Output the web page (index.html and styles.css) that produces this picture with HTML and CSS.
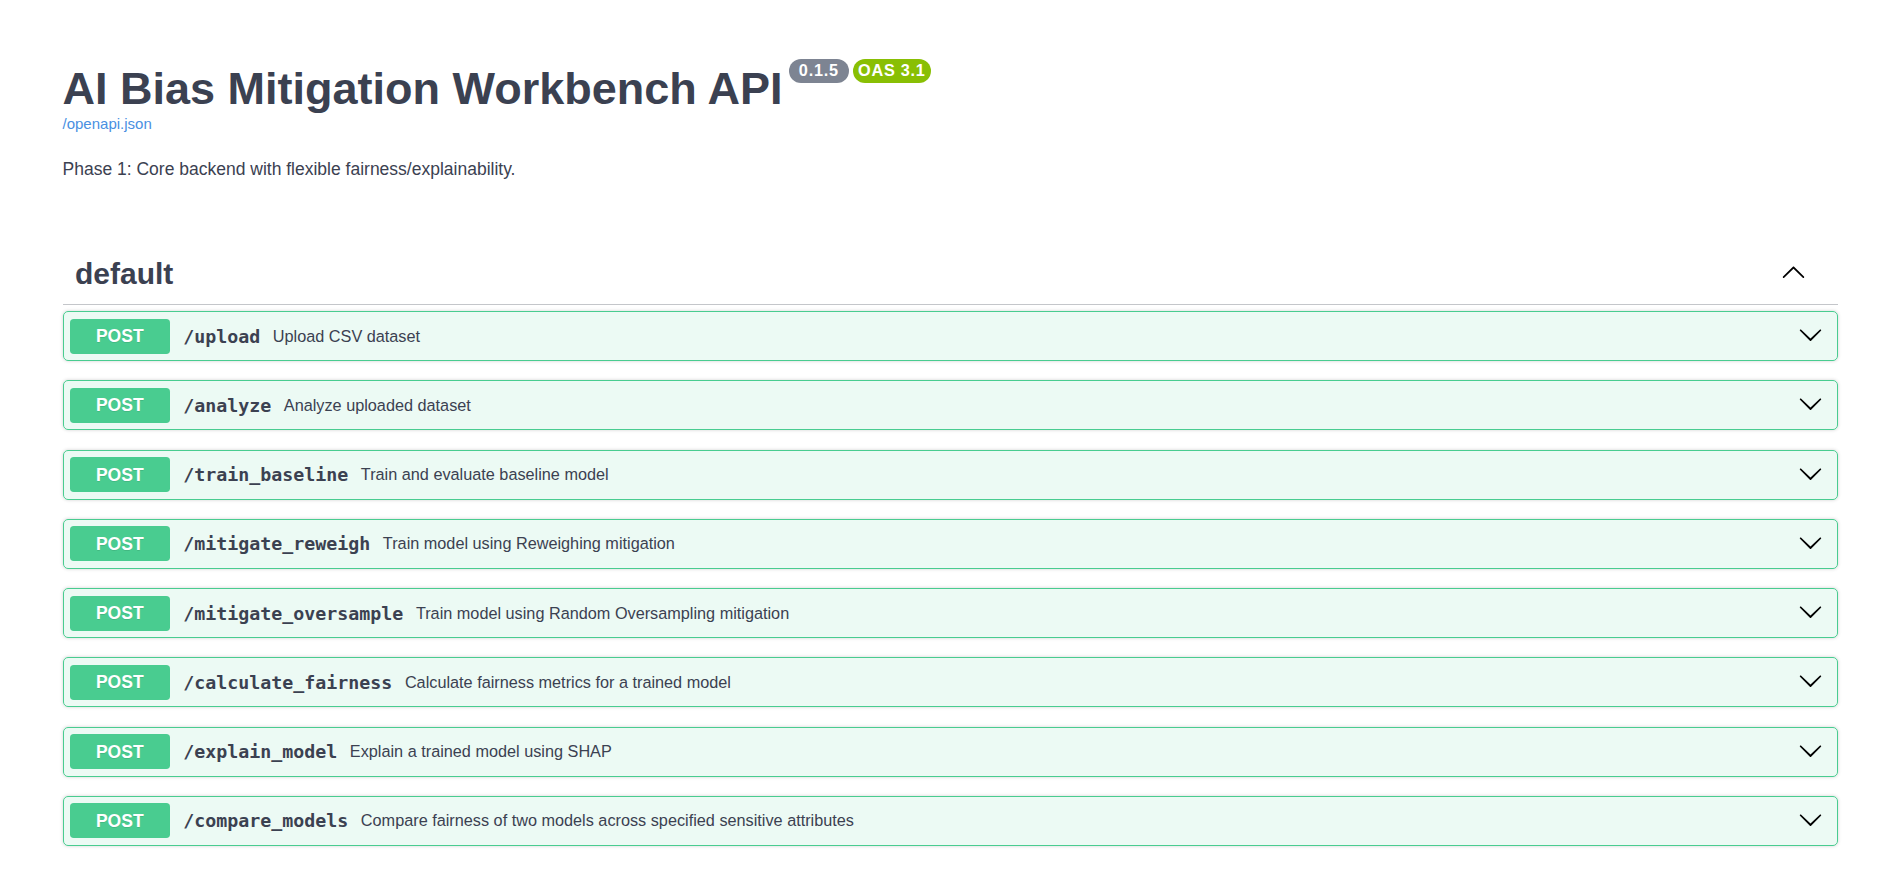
FILE: index.html
```html
<!DOCTYPE html>
<html lang="en">
<head>
<meta charset="utf-8">
<title>AI Bias Mitigation Workbench API - Swagger UI</title>
<link rel="stylesheet" href="styles.css">
</head>
<body>
<div class="wrapper">
  <section class="info">
    <div class="main">
      <h2 class="title">
        <span class="title-text">AI Bias Mitigation Workbench API</span>
        <small class="badge badge-version">&nbsp;0.1.5&nbsp;</small>
        <small class="badge badge-oas">OAS 3.1</small>
      </h2>
      <a class="spec-link" href="#">/openapi.json</a>
    </div>
    <p class="description">Phase 1: Core backend with flexible fairness/explainability.</p>
  </section>

  <section class="tag-section">
    <h3 class="tag">
      <span class="tag-name">default</span>
      <svg class="arrow arrow-up" width="25" height="25" viewBox="0 0 20 20" aria-hidden="true"><path d="M17.418 14.908c.272.268.709.268.979 0s.271-.701 0-.969l-7.908-7.83c-.27-.268-.707-.268-.979 0l-7.908 7.830c-.27.268-.27.701 0 .969.271.268.709.268.979 0L10 7.767l7.418 7.141z"/></svg>
    </h3>

    <div class="ops">
      <div class="op">
        <span class="method">POST</span>
        <span class="path">/upload</span>
        <span class="summary">Upload CSV dataset</span>
        <svg class="arrow arrow-down" width="25" height="25" viewBox="0 0 20 20" aria-hidden="true"><path d="M17.418 6.109c.272-.268.709-.268.979 0s.271.701 0 .969l-7.908 7.83c-.27.268-.707.268-.979 0l-7.908-7.83c-.27-.268-.27-.701 0-.969.271-.268.709-.268.979 0L10 13.25l7.418-7.141z"/></svg>
      </div>
      <div class="op">
        <span class="method">POST</span>
        <span class="path">/analyze</span>
        <span class="summary">Analyze uploaded dataset</span>
        <svg class="arrow arrow-down" width="25" height="25" viewBox="0 0 20 20" aria-hidden="true"><path d="M17.418 6.109c.272-.268.709-.268.979 0s.271.701 0 .969l-7.908 7.83c-.27.268-.707.268-.979 0l-7.908-7.83c-.27-.268-.27-.701 0-.969.271-.268.709-.268.979 0L10 13.25l7.418-7.141z"/></svg>
      </div>
      <div class="op">
        <span class="method">POST</span>
        <span class="path">/train_baseline</span>
        <span class="summary">Train and evaluate baseline model</span>
        <svg class="arrow arrow-down" width="25" height="25" viewBox="0 0 20 20" aria-hidden="true"><path d="M17.418 6.109c.272-.268.709-.268.979 0s.271.701 0 .969l-7.908 7.83c-.27.268-.707.268-.979 0l-7.908-7.83c-.27-.268-.27-.701 0-.969.271-.268.709-.268.979 0L10 13.25l7.418-7.141z"/></svg>
      </div>
      <div class="op">
        <span class="method">POST</span>
        <span class="path">/mitigate_reweigh</span>
        <span class="summary">Train model using Reweighing mitigation</span>
        <svg class="arrow arrow-down" width="25" height="25" viewBox="0 0 20 20" aria-hidden="true"><path d="M17.418 6.109c.272-.268.709-.268.979 0s.271.701 0 .969l-7.908 7.83c-.27.268-.707.268-.979 0l-7.908-7.83c-.27-.268-.27-.701 0-.969.271-.268.709-.268.979 0L10 13.25l7.418-7.141z"/></svg>
      </div>
      <div class="op">
        <span class="method">POST</span>
        <span class="path">/mitigate_oversample</span>
        <span class="summary">Train model using Random Oversampling mitigation</span>
        <svg class="arrow arrow-down" width="25" height="25" viewBox="0 0 20 20" aria-hidden="true"><path d="M17.418 6.109c.272-.268.709-.268.979 0s.271.701 0 .969l-7.908 7.83c-.27.268-.707.268-.979 0l-7.908-7.83c-.27-.268-.27-.701 0-.969.271-.268.709-.268.979 0L10 13.25l7.418-7.141z"/></svg>
      </div>
      <div class="op">
        <span class="method">POST</span>
        <span class="path">/calculate_fairness</span>
        <span class="summary">Calculate fairness metrics for a trained model</span>
        <svg class="arrow arrow-down" width="25" height="25" viewBox="0 0 20 20" aria-hidden="true"><path d="M17.418 6.109c.272-.268.709-.268.979 0s.271.701 0 .969l-7.908 7.83c-.27.268-.707.268-.979 0l-7.908-7.83c-.27-.268-.27-.701 0-.969.271-.268.709-.268.979 0L10 13.25l7.418-7.141z"/></svg>
      </div>
      <div class="op">
        <span class="method">POST</span>
        <span class="path">/explain_model</span>
        <span class="summary">Explain a trained model using SHAP</span>
        <svg class="arrow arrow-down" width="25" height="25" viewBox="0 0 20 20" aria-hidden="true"><path d="M17.418 6.109c.272-.268.709-.268.979 0s.271.701 0 .969l-7.908 7.83c-.27.268-.707.268-.979 0l-7.908-7.83c-.27-.268-.27-.701 0-.969.271-.268.709-.268.979 0L10 13.25l7.418-7.141z"/></svg>
      </div>
      <div class="op">
        <span class="method">POST</span>
        <span class="path">/compare_models</span>
        <span class="summary">Compare fairness of two models across specified sensitive attributes</span>
        <svg class="arrow arrow-down" width="25" height="25" viewBox="0 0 20 20" aria-hidden="true"><path d="M17.418 6.109c.272-.268.709-.268.979 0s.271.701 0 .969l-7.908 7.83c-.27.268-.707.268-.979 0l-7.908-7.83c-.27-.268-.27-.701 0-.969.271-.268.709-.268.979 0L10 13.25l7.418-7.141z"/></svg>
      </div>
    </div>
  </section>
</div>
</body>
</html>
```
FILE: styles.css
```css
html, body {
  margin: 0;
  background: #fff;
}

body {
  padding-left: 4px;
  font-family: "Liberation Sans", Arial, sans-serif;
  color: #3b4151;
}

.wrapper {
  box-sizing: border-box;
  max-width: 1825px;
  margin: 0 auto;
  padding: 0 25px;
}

.info {
  margin: 62.5px 0 0;
}

.main {
  display: flex;
  flex-direction: column;
  align-items: flex-start;
  margin-bottom: 27px;
}

.title {
  display: flex;
  align-items: flex-start;
  margin: 0;
  font-size: 45px;
  font-weight: 700;
  line-height: 51.7px;
  color: #3b4151;
}

.badge {
  display: inline-block;
  margin-top: -3.5px;
  padding: 3px 5px;
  border-radius: 71px;
  font-size: 16.25px;
  font-weight: 700;
  line-height: 17.7px;
  letter-spacing: 0.75px;
  color: #fff;
  white-space: pre;
}

.badge-version {
  margin-left: 6px;
  background: #7d8492;
}

.badge-oas {
  margin-left: 4px;
  background: #89bf04;
}

.spec-link {
  margin-top: 1px;
  font-size: 15px;
  line-height: 17.2px;
  color: #4990e2;
  text-decoration: none;
}

.description {
  margin: 0;
  font-size: 17.5px;
  line-height: 20.1px;
  color: #3b4151;
}

.tag-section {
  margin-top: 65px;
}

.tag {
  display: flex;
  align-items: center;
  margin: 0 0 6px;
  padding: 12.5px 31.75px 12.5px 12.5px;
  border-bottom: 1px solid rgba(59, 65, 81, 0.3);
  font-size: 30px;
  font-weight: 700;
  line-height: 34.5px;
  color: #3b4151;
}

.tag-name {
  flex: 1 1 auto;
}

.arrow {
  flex: none;
  fill: #000;
}

.arrow-up {
  margin-bottom: 6px;
}

.arrow-down {
  margin-bottom: 3px;
}

.op {
  display: flex;
  align-items: center;
  margin: 0 0 19.25px;
  padding: 6.5px 14px 6.5px 6.25px;
  border: 1px solid #49cc90;
  border-radius: 5px;
  background: rgba(73, 204, 144, 0.1);
  box-shadow: 0 0 3.75px rgba(0, 0, 0, 0.19);
}

.method {
  flex: none;
  min-width: 100px;
  padding: 7.5px 0;
  border-radius: 3.75px;
  background: #49cc90;
  color: #fff;
  font-size: 17.5px;
  font-weight: 700;
  line-height: 20px;
  text-align: center;
  text-shadow: 0 1px 0 rgba(0, 0, 0, 0.1);
}

.path {
  flex: none;
  padding: 0 12.5px 0 13.5px;
  font-family: "DejaVu Sans Mono", "Liberation Mono", monospace;
  font-size: 18.3px;
  font-weight: 700;
  color: #3b4151;
}

.summary {
  flex: 1 1 auto;
  font-size: 16.25px;
  color: #3b4151;
}
```
